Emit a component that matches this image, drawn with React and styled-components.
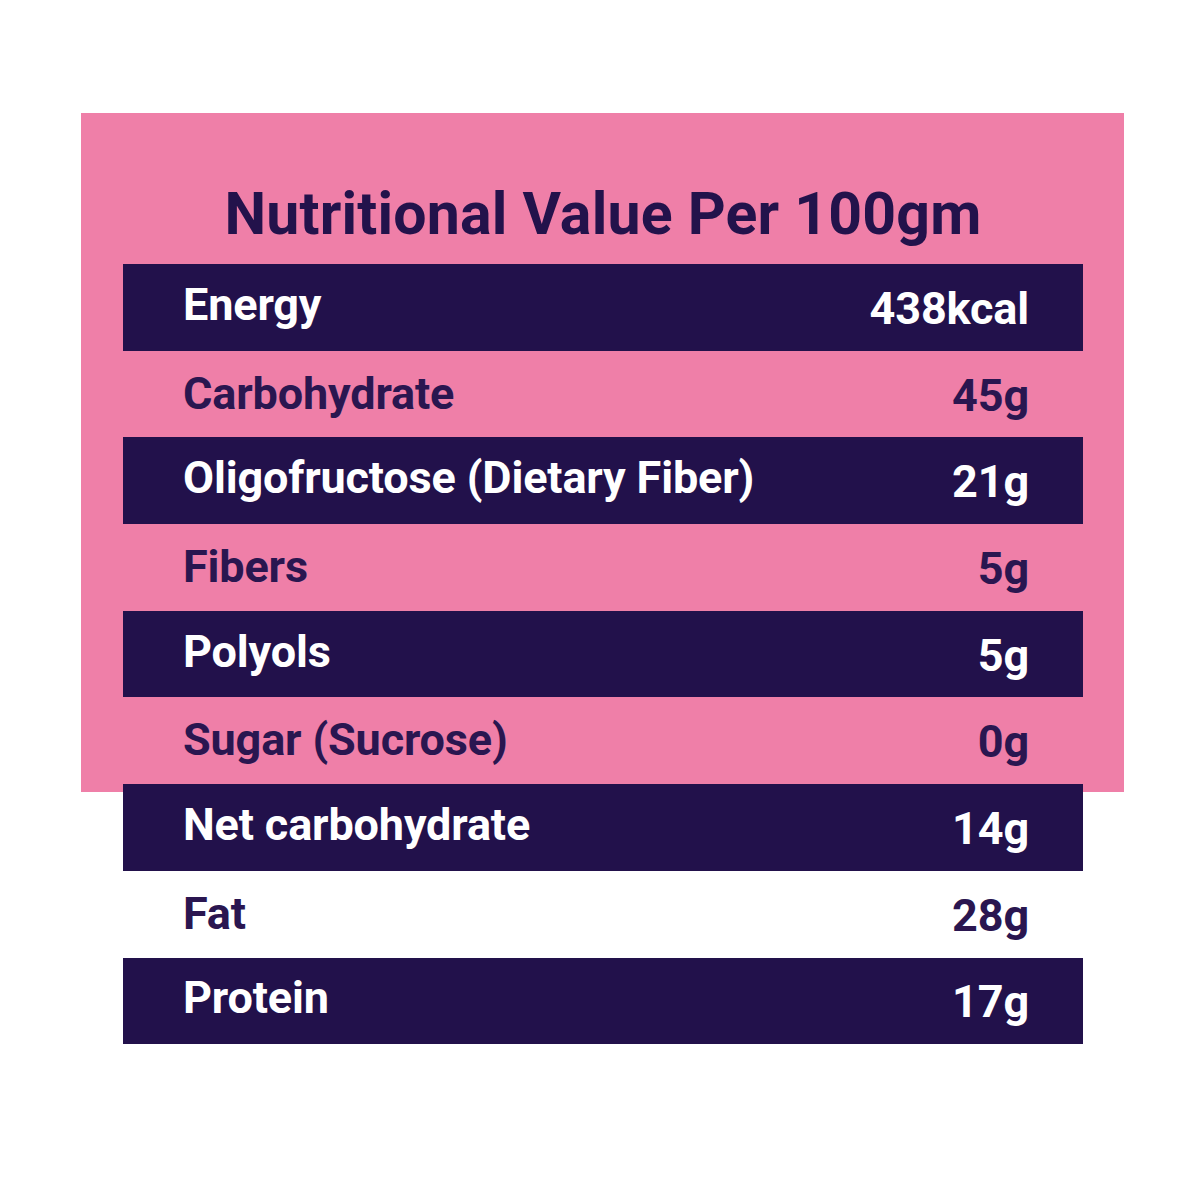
import styled, { createGlobalStyle } from 'styled-components';

const GlobalStyle = createGlobalStyle`
  body {
    margin: 0;
    background: #ffffff;
    font-family: Roboto, "Liberation Sans", sans-serif;
  }
`;

const Page = styled.div`
  width: 1200px;
  height: 1200px;
  padding: 113px 0 0 81px;
  box-sizing: border-box;
`;

const Card = styled.div`
  display: grid;
  width: 1043px;
`;

const PinkBack = styled.div`
  grid-area: 1 / 1;
  align-self: start;
  height: 679px;
  background: #ef7fa8;
`;

const Content = styled.div`
  grid-area: 1 / 1;
  display: flex;
  flex-direction: column;
  padding: 0 41px 0 42px;
`;

const Title = styled.h1`
  margin: 0;
  height: 151px;
  display: flex;
  align-items: center;
  justify-content: center;
  padding-top: 50px;
  box-sizing: border-box;
  font-size: 59px;
  font-weight: 700;
  color: #23124b;
  letter-spacing: 0.2px;
`;

const Row = styled.div`
  display: flex;
  align-items: center;
  justify-content: space-between;
  height: 86.7px;
  padding: 0 54px 0 60px;
  box-sizing: border-box;
  background: ${p => (p.dark ? '#22114b' : 'transparent')};
  color: ${p => (p.dark ? '#ffffff' : '#2a1650')};
  font-size: 45px;
  font-weight: 700;
  letter-spacing: -0.15px;
`;

const Label = styled.span`
  margin-top: ${p => (p.dark ? '-6px' : '-2px')};
`;

const Amount = styled.span`
  margin-top: 2px;
`;

const rows = [
  ['Energy', '438kcal'],
  ['Carbohydrate', '45g'],
  ['Oligofructose (Dietary Fiber)', '21g'],
  ['Fibers', '5g'],
  ['Polyols', '5g'],
  ['Sugar (Sucrose)', '0g'],
  ['Net carbohydrate', '14g'],
  ['Fat', '28g'],
  ['Protein', '17g'],
];

export default function App() {
  return (
    <Page>
      <GlobalStyle />
      <Card>
        <PinkBack />
        <Content>
          <Title>Nutritional Value Per 100gm</Title>
          {rows.map(([name, value], i) => (
            <Row key={name} dark={i % 2 === 0}>
              <Label dark={i % 2 === 0}>{name}</Label>
              <Amount>{value}</Amount>
            </Row>
          ))}
        </Content>
      </Card>
    </Page>
  );
}
